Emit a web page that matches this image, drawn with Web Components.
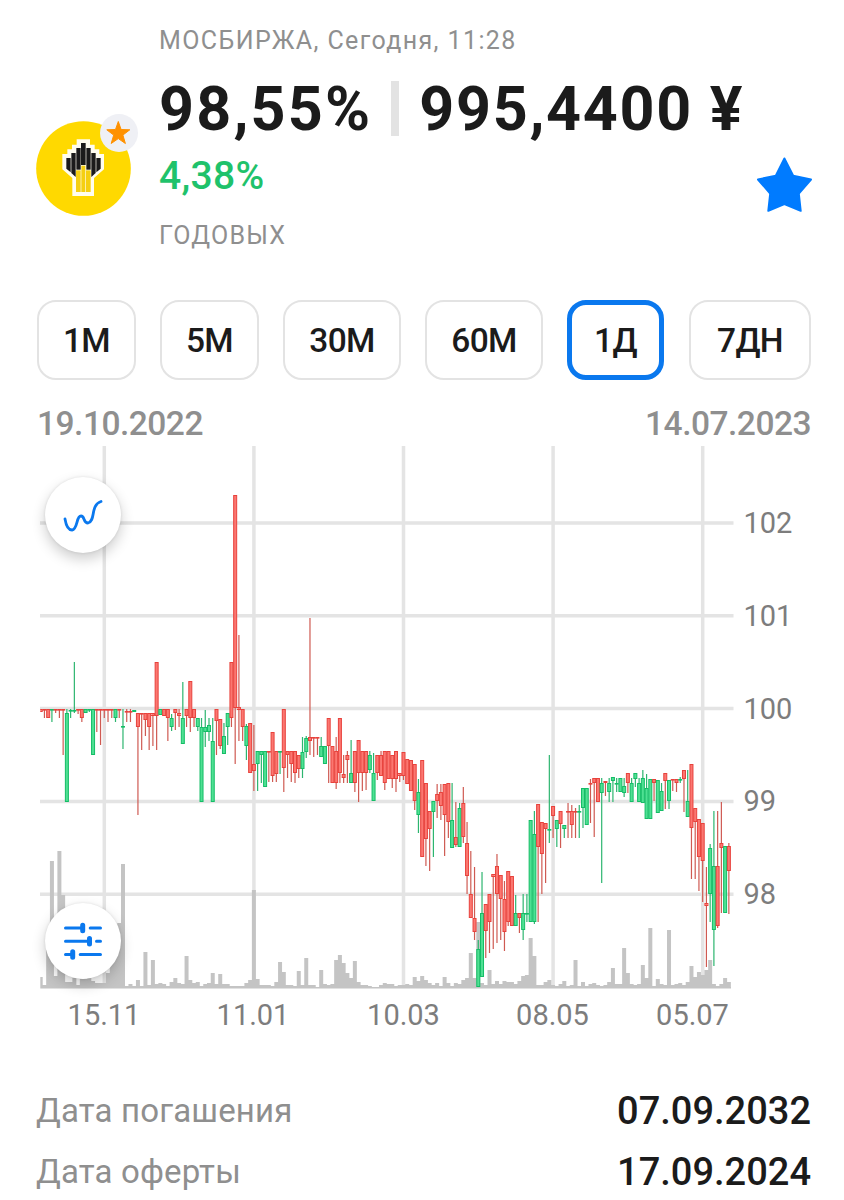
<!DOCTYPE html>
<html lang="ru">
<head>
<meta charset="utf-8">
<title>МОСБИРЖА</title>
<style>
    body {
        margin: 0;
        background: #fff;
        color: #1b1b1b;
        font-family: Roboto, "Liberation Sans", sans-serif;
    }
</style>
</head>
<body>
<bond-page></bond-page>

<script>
class BaseElement extends HTMLElement {
    execShadowContent(content) {
        const shadowRoot = this.attachShadow({ mode: 'open' });
        shadowRoot.innerHTML = content;
        this.shadow = shadowRoot;
    }
}

class IssuerLogo extends BaseElement {
    static #TEMPLATE = `
<style>
    :host {
        display: block;
        position: relative;
        width: 95px;
        height: 95px;
    }

    svg {
        display: block;
    }

    .badge {
        position: absolute;
        left: 64px;
        top: -7px;
    }
</style>
<svg width="95" height="95" viewBox="46 303 285 285">
    <circle cx="188.500" cy="445.500" r="142" fill="#ffd900"/>
    <path fill="#fffdf0" d="M168 358H208V374H222V388H236V402H250V448L220 474V528H155V474L125 448V402H140V388H154V374H168Z"/>
    <g fill="#1b1b1b">
        <path d="M137 414h13v43l-13-11z"/>
        <path d="M152 399h13v72l-13-12z"/>
        <path d="M167 384h13v65h-13z"/>
        <path d="M181 369h14v66h-14z"/>
        <path d="M197 384h13v65h-13z"/>
        <path d="M212 399h13v60l-13 12z"/>
        <path d="M227 414h13v32l-13 11z"/>
    </g>
    <g fill="#f5cf12">
        <path d="M166 451h14v65h-14z"/>
        <path d="M182 437h12v79h-12z"/>
        <path d="M196 451h14v65h-14z"/>
    </g>
</svg>
<svg class="badge" width="38" height="38" viewBox="0 0 38 38">
    <circle cx="19" cy="19" r="19" fill="#eff0f5"/>
    <path fill="#ff9100" stroke="#ff9100" stroke-linejoin="round" d="M18.300 7.500l2.800 8 8.700.3-6.900 5.300 2.500 8.400-7.100-4.900-7.100 4.900 2.500-8.400-6.900-5.300 8.700-.3z"/>
</svg>
    `;

    constructor() {
        super();
        this.execShadowContent(IssuerLogo.#TEMPLATE);
    }
}

class QuoteHeader extends BaseElement {
    static #TEMPLATE = `
<style>
    :host {
        display: grid;
        grid-template-columns: 123px 1fr 55px;
        height: 252px;
    }

    issuer-logo {
        margin-top: 121px;
    }

    .quote {
        display: flex;
        flex-direction: column;
        padding-top: 25px;
        white-space: nowrap;
    }

    .note {
        font-size: 25px;
        line-height: 32px;
        color: #8f8f8f;
        letter-spacing: 1.4px;
    }

    .unit {
        letter-spacing: 1.2px;
    }

    .price {
        display: flex;
        align-items: center;
        height: 68px;
        margin-top: 17px;
        font-size: 61px;
        font-weight: 700;
        letter-spacing: 1.7px;
    }

    .price slot {
        display: block;
        padding-top: 2px;
    }

    .price slot[name="percent"] {
        letter-spacing: 2.2px;
    }

    .price i {
        width: 8px;
        height: 55px;
        margin: 0 20px 0 19px;
        background: #e3e3e3;
    }

    .yield {
        margin: 10px 0 20px;
        font-size: 39px;
        font-weight: 500;
        line-height: 48px;
        letter-spacing: 0.3px;
        color: #1fc26b;
    }

    .star {
        margin-top: 156px;
    }
</style>
<issuer-logo></issuer-logo>
<div class="quote">
    <div class="note"><slot name="source"></slot></div>
    <div class="price"><slot name="percent"></slot><i></i><slot name="price"></slot></div>
    <div class="yield"><slot name="yield"></slot></div>
    <div class="note unit"><slot name="unit"></slot></div>
</div>
<svg class="star" width="56" height="58" viewBox="756 156 56 58">
    <path fill="#007bff" stroke="#007bff" stroke-width="2" stroke-linejoin="round" d="M784.400 158.500L793.200 175.700L811 179.500L798.800 193.500L800.700 210.800L784.400 204.100L768.300 210.800L770.200 193.500L758 179.500L775.800 175.700Z"/>
</svg>
    `;

    constructor() {
        super();
        this.execShadowContent(QuoteHeader.#TEMPLATE);
    }
}

class PeriodButton extends BaseElement {
    static #TEMPLATE = `
<style>
    :host {
        display: flex;
        align-items: center;
        justify-content: center;
        box-sizing: border-box;
        height: 80px;
        border: 2px solid #e3e3e3;
        border-radius: 19px;
        font-size: 33.5px;
        font-weight: 500;
        line-height: 40px;
        letter-spacing: -0.6px;
        padding-top: 1px;
    }

    :host([active]) {
        border: 5px solid #0a78ee;
    }
</style>
<slot></slot>
    `;

    constructor() {
        super();
        this.execShadowContent(PeriodButton.#TEMPLATE);
    }
}

class PeriodTabs extends BaseElement {
    static #TEMPLATE = `
<style>
    :host {
        display: grid;
        grid-template-columns: 99px 99px 118px 118px 97px 123px;
        gap: 24px;
        margin: 48px 0 0 1px;
    }

    ::slotted(:last-child) {
        margin-left: 1px;
    }
</style>
<slot></slot>
    `;

    constructor() {
        super();
        this.execShadowContent(PeriodTabs.#TEMPLATE);
    }
}

class FabButton extends BaseElement {
    static #TEMPLATE = `
<style>
    :host {
        display: block;
        width: 76px;
        height: 76px;
        border-radius: 50%;
        background: #fff;
        box-shadow: 0 6px 14px rgba(0, 0, 0, 0.2), 0 0 3px rgba(0, 0, 0, 0.1);
    }
</style>
<slot></slot>
    `;

    constructor() {
        super();
        this.execShadowContent(FabButton.#TEMPLATE);
    }
}

class PriceChart extends BaseElement {
    static #STEP = 3.74;
    static #FIRST = 40.7;
    static #BASE = 988.5;

    // side, body top, body bottom, [high, low]
    static #CANDLES = `
r 709 712|r 709 709 709 718|r 709 718|g 709 709 709 722|r 709 709 709 713|r 709 709 709 718|r 709 709 709 755|g 713 802 709 802|g 710 710 709 718|g 710 710 662 713
r 709 709 709 714|r 709 718 709 722|g 709 713|g 709 709 709 712|g 709 755|r 709 709 709 732|r 709 709 709 745|r 709 709 709 718|r 709 709 709 722|r 709 709 709 718
g 709 718 709 722|r 709 709 709 718|g 726 726 709 749|r 711 711 709 722|r 711 711 709 722|g 710 712|r 713 727 713 815|r 713 713 713 750|r 713 720 713 736|r 713 727 713 750
r 713 716 713 746|r 662 716 662 750|g 709 715|r 709 716|r 709 718 709 741|g 718 727 714 731|r 709 713 709 730|r 713 716 709 727|g 718 744 682 744|r 709 716 709 727
r 681 718 681 732|r 709 718 709 727|g 718 727 718 731|g 727 802 718 802|g 727 732 710 747|g 725 732 718 741|g 741 802 718 802|r 709 721 709 755|r 719 746 719 749|g 736 754 723 754
g 713 727 713 745|r 662 718 662 727|r 495 708 495 764|r 707 710 635 741|r 709 727 709 741|g 726 746 724 760|r 723 773|r 764 771 725 791|g 751 764 751 791|g 751 755 751 783
g 751 787|r 751 751 751 782|r 732 776 732 782|r 751 774 751 782|g 751 751 751 774|r 709 768 709 792|r 751 755 751 778|r 751 764 751 782|r 751 773 751 783|r 755 769 755 778
g 752 769 737 778|g 738 752 736 758|r 737 741 618 755|r 737 737 737 757|r 737 737 737 755|g 746 757 737 757|g 746 764|r 718 746 718 783|r 746 783|r 751 783 737 789
r 718 773 718 783|r 774 778 755 783|r 755 760 751 783|g 773 783 740 783|r 751 783 751 792|r 740 773 740 802|r 751 773 751 791|r 751 773 751 790|g 755 770 751 773|g 773 801 753 801
r 755 773 755 780|r 755 776 751 776|r 751 783 751 790|r 751 779|r 755 779 755 788|r 751 779 751 792|r 773 776 773 782|r 752 776 752 780|r 759 784|r 760 791
r 764 801 764 810|g 792 815 779 833|r 760 857|r 783 839 783 866|r 811 829 811 871|g 801 812 801 857|r 794 801 784 818|r 792 806 784 820|r 784 815 784 856|r 783 822 783 838
g 820 848 783 848|r 837 845 802 847|g 808 847 803 847|r 803 837 787 843|r 843 876 822 894|r 894 918 851 918|r 918 932 867 940|g 949 987 940 987|g 913 977 872 977|r 904 931 904 958
r 894 922 894 953|r 874 877 874 949|r 866 894 854 943|r 875 899 875 940|r 899 932 881 951|r 871 922 871 926|r 876 926|g 913 926 895 926|r 913 918 913 933|g 913 930 894 940
g 913 913 894 922|g 820 922|g 834 922 811 924|r 804 847 804 922|r 822 854 822 894|r 823 829 823 883|g 829 829 755 843|r 806 816 806 838|g 820 829 820 847|r 811 824 811 848
g 825 829 825 838|r 811 811 803 838|r 811 825 805 838|r 811 811 808 838|g 811 811 805 838|g 788 808 788 828|g 788 825|r 783 783 779 823|r 778 783 778 837|r 778 802
g 783 793 778 883|r 781 783 781 796|g 783 792 778 802|g 777 781 777 802|g 783 783 778 792|g 778 792|g 786 793 778 797|r 773 783 773 793|g 783 802 778 802|g 773 779 773 787
g 783 802 778 802|g 778 803 770 803|g 788 819 774 819|g 779 819|r 779 783 779 801|g 780 813|g 791 811 783 811|r 773 781 773 809|g 780 801 780 809|r 779 779 779 791
r 779 783 779 792|g 779 779 777 783|r 770 779 770 812|g 801 817 770 817|r 764 828 764 879|r 808 822 808 879|r 819 857 819 891|r 823 861 823 902|r 903 906 867 967|g 848 894 844 922
g 866 930 811 966|r 866 926 811 928|r 843 848 802 913|g 846 913|r 846 871 843 914
`;

    // top edge of every volume bar
    static #VOLUMES = `
977 985 950 861 976 851 895 982 982 978 985 979 979 978 981 983 983 983 973 930 940 923 864 986 984 986 980 986 952 985
960 984 983 984 986 982 978 983 984 956 980 983 982 986 984 983 973 984 974 984 984 986 986 986 986 983 980 890 979 985
985 985 986 982 962 972 985 985 986 971 985 958 985 985 987 970 984 985 984 960 955 963 973 978 961 982 985 985 986 987
987 985 983 984 984 986 985 985 984 985 977 981 976 980 983 985 983 986 977 983 986 983 984 980 978 953 978 922 983 985
970 984 981 984 981 982 982 984 981 976 975 938 956 985 985 982 980 985 986 984 981 986 985 960 986 982 986 984 983 985
986 985 982 968 984 984 948 973 984 985 984 965 978 928 986 979 984 985 930 985 984 983 985 982 966 977 972 975 970 960
984 986 984 978 982
`;

    static #TEMPLATE = `
<style>
    :host {
        display: block;
        position: relative;
    }

    .range {
        display: flex;
        justify-content: space-between;
        margin: 0 0 0 1px;
        padding: 23px 0 4px;
        height: 39px;
        font-size: 33.5px;
        font-weight: 500;
        line-height: 41px;
        letter-spacing: -0.5px;
        color: #8f8f8f;
    }

    svg {
        display: block;
    }

    .plot text {
        font-size: 29px;
        fill: #7d7d7d;
    }

    fab-button {
        position: absolute;
        left: 9px;
    }

    .line {
        top: 97px;
    }

    .settings {
        top: 523px;
    }
</style>
<div class="range"><slot name="from"></slot><slot name="to"></slot></div>
<svg class="plot" width="775" height="594" viewBox="36 446 775 594"></svg>
<fab-button class="line">
    <svg width="76" height="76" viewBox="45 477 76 76" fill="none" stroke="#0a78ee" stroke-width="2.800" stroke-linecap="round">
        <path d="M65 519C66 525 68 530 72 530C78 529 76 516 81 516C85 516 83 523 88 523C96 521 90 505 101 501.500"/>
    </svg>
</fab-button>
<fab-button class="settings">
    <svg width="76" height="76" viewBox="45 903 76 76" stroke="#0a78ee" stroke-width="3" stroke-linecap="round">
        <path d="M65.500 928H82M90.200 928H100.500M65.500 941.300H89M96.500 941.300H100.500M65.500 954.500H72M80.200 954.500H100.500"/>
        <path stroke-width="5" d="M82.700 925.300v5.400M89.500 938.600v5.400M72.700 951.800v5.400"/>
    </svg>
</fab-button>
    `;

    constructor() {
        super();
        this.execShadowContent(PriceChart.#TEMPLATE);

        const clip = '<clipPath id="area"><path d="M40.300 446H740V990H40.300z"/></clipPath>';
        const series = `<g clip-path="url(#area)">${this.volumes()}${this.candles()}</g>`;
        this.shadow.querySelector('.plot').innerHTML = clip + this.grid() + series + this.labels();
    }

    static X(i) {
        return PriceChart.#FIRST + i * PriceChart.#STEP;
    }

    grid() {
        let d = '';
        for (let i = 0; i < 5; i++) {
            d += `M${104.3 + i * 149.6} 446V988`;
            d += `M40 ${523 + i * 92.8}H733.5`;
        }
        return `<path d="${d}" stroke="#e4e4e4" stroke-width="3.500"/>`;
    }

    volumes() {
        const tops = PriceChart.#VOLUMES.trim().split(/\s+/);
        let d = `M40 ${PriceChart.#BASE - 1.5}H731v1.500H40z`;
        tops.forEach((top, i) => {
            const x = (PriceChart.X(i) - 2).toFixed(2);
            d += `M${x} ${top}h4V${PriceChart.#BASE}h-4z`;
        });
        return `<path d="${d}" fill="#c4c4c4"/>`;
    }

    candles() {
        const list = PriceChart.#CANDLES.trim().split(/[|\n]/);
        let out = '';
        list.forEach((item, i) => {
            const [side, a, b, high, low] = item.split(' ');
            const top = Number(a);
            const height = Math.max(0.6, b - top - 1);
            const x = PriceChart.X(i);
            const red = ('r' === side);
            const wick = red ? '#cf5a52' : '#2db56f';
            const line = red ? '#e8423c' : '#14bd66';
            const fill = red ? '#fb7771' : '#4fe093';

            if (high) {
                out += `<path d="M${x.toFixed(2)} ${high}V${low}" stroke="${wick}" stroke-width="1.200"/>`;
            }
            out += `<rect x="${(x - 1.5).toFixed(2)}" y="${top + 0.5}" width="3" height="${height}" fill="${fill}" stroke="${line}"/>`;
        });
        return out;
    }

    labels() {
        let out = '';
        [102, 101, 100, 99, 98].forEach((value, i) => {
            out += `<text x="743.500" y="${533 + i * 92.8}">${value}</text>`;
        });
        [['15.11', 104], ['11.01', 253], ['10.03', 403.5], ['08.05', 552.5], ['05.07', 692.5]].forEach(([text, x]) => {
            out += `<text x="${x}" y="1024.500" text-anchor="middle">${text}</text>`;
        });
        return out;
    }
}

class DetailRow extends BaseElement {
    static #TEMPLATE = `
<style>
    :host {
        display: flex;
        justify-content: space-between;
        align-items: center;
        height: 61px;
        font-size: 33px;
        letter-spacing: 0.15px;
        color: #8f8f8f;
    }

    .value {
        font-size: 38px;
        font-weight: 500;
        color: #1b1b1b;
        letter-spacing: 0;
    }
</style>
<slot name="label"></slot>
<div class="value"><slot></slot></div>
    `;

    constructor() {
        super();
        this.execShadowContent(DetailRow.#TEMPLATE);
    }
}

class BondPage extends BaseElement {
    static #TEMPLATE = `
<style>
    :host {
        display: block;
        box-sizing: border-box;
        width: 844px;
        height: 1200px;
        padding: 0 33px 0 36px;
        overflow: hidden;
    }

    .details {
        margin-top: 40px;
    }
</style>
<quote-header>
    <span slot="source">МОСБИРЖА, Сегодня, 11:28</span>
    <span slot="percent">98,55%</span>
    <span slot="price">995,4400 ¥</span>
    <span slot="yield">4,38%</span>
    <span slot="unit">ГОДОВЫХ</span>
</quote-header>
<period-tabs>
    <period-button>1М</period-button>
    <period-button>5М</period-button>
    <period-button>30М</period-button>
    <period-button>60М</period-button>
    <period-button active>1Д</period-button>
    <period-button>7ДН</period-button>
</period-tabs>
<price-chart>
    <span slot="from">19.10.2022</span>
    <span slot="to">14.07.2023</span>
</price-chart>
<div class="details">
    <detail-row><span slot="label">Дата погашения</span>07.09.2032</detail-row>
    <detail-row><span slot="label">Дата оферты</span>17.09.2024</detail-row>
</div>
    `;

    constructor() {
        super();
        this.execShadowContent(BondPage.#TEMPLATE);
    }
}

customElements.define('issuer-logo', IssuerLogo);
customElements.define('quote-header', QuoteHeader);
customElements.define('period-button', PeriodButton);
customElements.define('period-tabs', PeriodTabs);
customElements.define('fab-button', FabButton);
customElements.define('price-chart', PriceChart);
customElements.define('detail-row', DetailRow);
customElements.define('bond-page', BondPage);
</script>
</body>
</html>
